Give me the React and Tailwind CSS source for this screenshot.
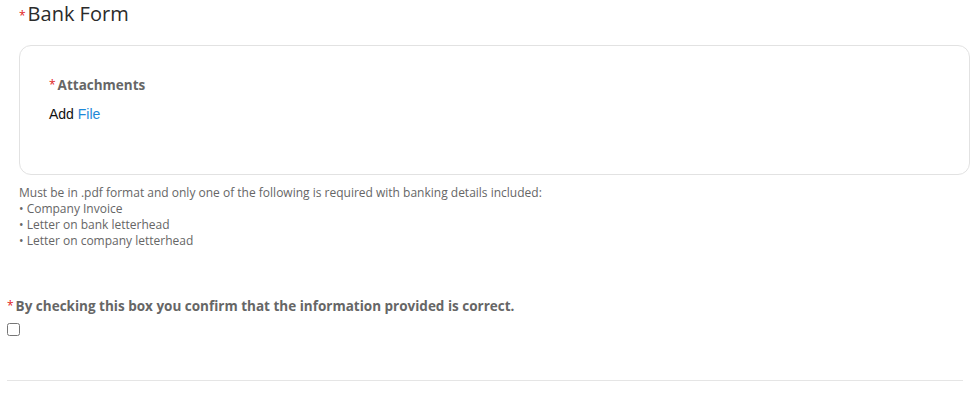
export default function App() {
  return (
    <div className="w-[970px] h-[412px] overflow-hidden bg-white font-['Open_Sans','Noto_Sans',sans-serif]">
      <div className="pl-[19px] pt-[1px] flex items-start">
        <span className="text-[#e02020] text-[12px] mt-[6px] mr-[2px]">*</span>
        <h1 className="text-[20px] leading-[26px] text-[#2b2b2b]">Bank Form</h1>
      </div>

      <div className="ml-[19px] mt-[18px] h-[130px] border border-[#e2e2e2] rounded-[12px] pl-[29px] pt-[30px]">
        <div className="flex items-start">
          <span className="text-[#e02020] text-[12px] mr-[2px]">*</span>
          <span className="text-[13.5px] leading-[18px] font-bold text-[#666]">Attachments</span>
        </div>
        <div className="mt-[12px] text-[14px] leading-[16px] font-['Liberation_Sans',Arial,sans-serif]">
          <span className="text-[#111]">Add</span>{" "}
          <span className="text-[#1e88d8]">File</span>
        </div>
      </div>

      <div className="ml-[19px] mt-[10px] text-[12px] leading-[16px] text-[#666]">
        <p>Must be in .pdf format and only one of the following is required with banking details included:</p>
        <p>• Company Invoice</p>
        <p>• Letter on bank letterhead</p>
        <p>• Letter on company letterhead</p>
      </div>

      <div className="ml-[7px] mt-[48px] flex items-start">
        <span className="text-[#e02020] text-[12px] mr-[2px]">*</span>
        <span className="text-[13.5px] leading-[18px] font-bold text-[#666]">
          By checking this box you confirm that the information provided is correct.
        </span>
      </div>
      <div className="ml-[7px] mt-[8px]">
        <input type="checkbox" className="w-[13px] h-[13px] m-0 block" />
      </div>

      <div className="ml-[7px] mr-[7px] mt-[44px] border-t border-[#e5e5e5]" />
    </div>
  );
}
